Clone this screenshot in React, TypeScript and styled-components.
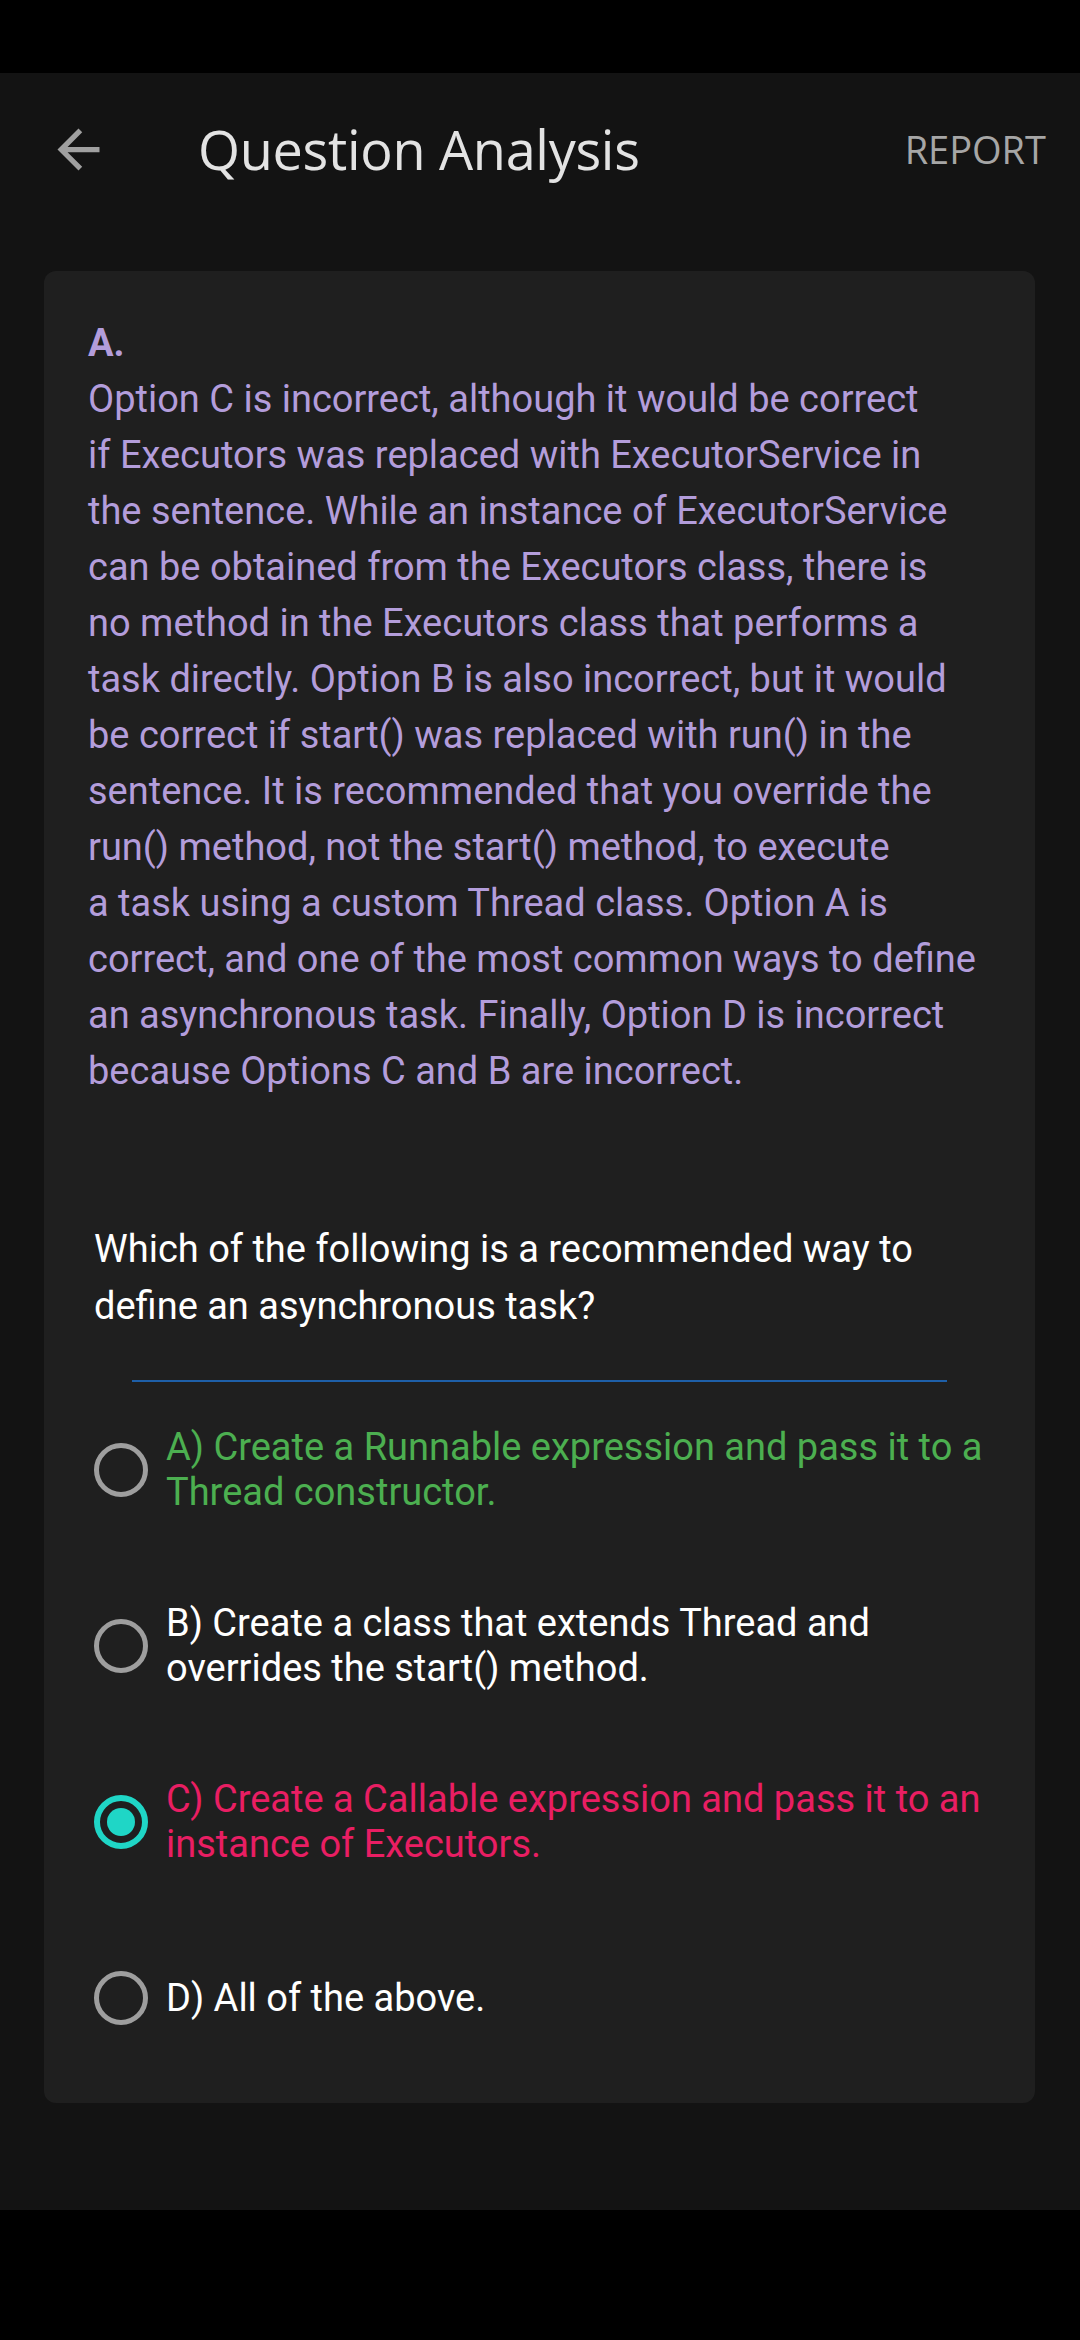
import React from 'react';
import styled, { createGlobalStyle } from 'styled-components';

const GlobalStyle = createGlobalStyle`
  html, body {
    margin: 0;
    padding: 0;
    background: #000;
  }
  body {
    font-family: Roboto, "Noto Sans", sans-serif;
  }
`;

const Page = styled.div`
  width: 1080px;
  height: 2340px;
  display: flex;
  flex-direction: column;
  background: #000;
`;

const StatusBar = styled.div`
  height: 73px;
  background: #000;
`;

const Screen = styled.div`
  height: 2137px;
  background: #131313;
  display: flex;
  flex-direction: column;
`;

const AppBar = styled.div`
  height: 152px;
  display: flex;
  align-items: center;
  padding: 0 34px 0 47px;
`;

const BackButton = styled.div`
  width: 63px;
  height: 63px;
  display: flex;
  align-items: center;
  justify-content: center;
`;

const Title = styled.div`
  flex: 1;
  margin-left: 88px;
  font-family: "Open Sans", sans-serif;
  font-size: 54px;
  color: #e3e3e3;
  letter-spacing: -0.3px;
`;

const ReportButton = styled.div`
  font-family: "Open Sans", sans-serif;
  font-size: 38px;
  color: #a6a6a6;
`;

const Card = styled.div`
  margin: 46px 45px 0 44px;
  background: #1f1f1f;
  border-radius: 12px;
  padding: 44px 0 17px 0;
  display: flex;
  flex-direction: column;
`;

const Explanation = styled.div`
  padding: 0 44px;
  color: #b39ddb;
  font-size: 38px;
  line-height: 56px;
  white-space: nowrap;
`;

const AnswerLabel = styled.div`
  font-weight: 700;
`;

const Question = styled.div`
  margin-top: 122px;
  padding: 0 50px;
  color: #ffffff;
  font-size: 38px;
  line-height: 57px;
  white-space: nowrap;
`;

const Divider = styled.div`
  margin: 45px 88px 0 88px;
  height: 2px;
  background: #1e5fa8;
`;

const OptionRow = styled.div`
  height: 176px;
  display: flex;
  align-items: center;
  padding: 0 30px 0 50px;
  gap: 18px;
`;

const Radio = styled.div<{ $checked?: boolean }>`
  flex: none;
  width: 54px;
  height: 54px;
  box-sizing: border-box;
  border-radius: 50%;
  border: ${p => (p.$checked ? '6px solid #1fd6c6' : '5px solid #9e9e9e')};
  display: flex;
  align-items: center;
  justify-content: center;
  &::after {
    content: '';
    display: ${p => (p.$checked ? 'block' : 'none')};
    width: 28px;
    height: 28px;
    border-radius: 50%;
    background: #1fd6c6;
  }
`;

const OptionText = styled.div<{ $color: string }>`
  color: ${p => p.$color};
  font-size: 38px;
  line-height: 45px;
  white-space: nowrap;
`;

const NavBar = styled.div`
  flex: 1;
  background: #000;
`;

const explanationLines = [
  'Option C is incorrect, although it would be correct',
  'if Executors was replaced with ExecutorService in',
  'the sentence. While an instance of ExecutorService',
  'can be obtained from the Executors class, there is',
  'no method in the Executors class that performs a',
  'task directly. Option B is also incorrect, but it would',
  'be correct if start() was replaced with run() in the',
  'sentence. It is recommended that you override the',
  'run() method, not the start() method, to execute',
  'a task using a custom Thread class. Option A is',
  'correct, and one of the most common ways to define',
  'an asynchronous task. Finally, Option D is incorrect',
  'because Options C and B are incorrect.',
];

const options = [
  { lines: ['A) Create a Runnable expression and pass it to a', 'Thread constructor.'], color: '#4caf50' },
  { lines: ['B) Create a class that extends Thread and', 'overrides the start() method.'], color: '#ffffff' },
  { lines: ['C) Create a Callable expression and pass it to an', 'instance of Executors.'], color: '#e91e63', checked: true },
  { lines: ['D) All of the above.'], color: '#ffffff' },
];

const BackArrow = () => (
  <svg width="63" height="63" viewBox="0 0 24 24">
    <path d="M20 11H7.83l5.59-5.59L12 4l-8 8 8 8 1.41-1.41L7.83 13H20v-2z" fill="#a0a0a0" />
  </svg>
);

const withBreaks = (lines: string[]) =>
  lines.map((line, i) => (
    <React.Fragment key={i}>
      {line}
      {i < lines.length - 1 && <br />}
    </React.Fragment>
  ));

const App = () => {
  return (
    <>
      <GlobalStyle />
      <Page>
        <StatusBar />
        <Screen>
          <AppBar>
            <BackButton>
              <BackArrow />
            </BackButton>
            <Title>Question Analysis</Title>
            <ReportButton>REPORT</ReportButton>
          </AppBar>
          <Card>
            <Explanation>
              <AnswerLabel>A.</AnswerLabel>
              {withBreaks(explanationLines)}
            </Explanation>
            <Question>
              Which of the following is a recommended way to
              <br />
              define an asynchronous task?
            </Question>
            <Divider />
            {options.map((opt, i) => (
              <OptionRow key={i}>
                <Radio $checked={opt.checked} />
                <OptionText $color={opt.color}>{withBreaks(opt.lines)}</OptionText>
              </OptionRow>
            ))}
          </Card>
        </Screen>
        <NavBar />
      </Page>
    </>
  );
};

export default App;
